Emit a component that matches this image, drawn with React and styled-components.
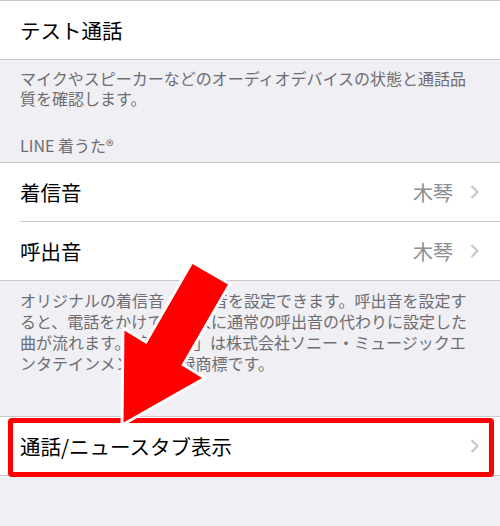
import React from 'react';
import styled, { createGlobalStyle } from 'styled-components';

const GlobalStyle = createGlobalStyle`
  html, body {
    margin: 0;
    padding: 0;
    background: #efeff4;
  }
  body {
    font-family: "Noto Sans CJK JP", "Noto Sans", "Liberation Sans", sans-serif;
    -webkit-font-smoothing: antialiased;
  }
`;

const Page = styled.div`
  position: relative;
  width: 500px;
  height: 526px;
  overflow: hidden;
  background: #efeff4;
`;

const Group = styled.div`
  position: relative;
  background: #fff;
  border-top: 1px solid #c8c7cc;
  border-bottom: 1px solid #c8c7cc;
  margin-top: ${(p) => p.$gap || 0}px;
`;

const Row = styled.div`
  height: 58px;
  display: flex;
  align-items: center;
  padding: 0 20px;
  box-sizing: border-box;
`;

const Separator = styled.div`
  height: 1px;
  margin-left: 20px;
  background: #c8c7cc;
`;

const Label = styled.span`
  flex: 1;
  font-size: 20.5px;
  color: #000;
  white-space: nowrap;
`;

const Value = styled.span`
  font-size: 20px;
  color: #8e8e93;
  margin-right: 16px;
`;

const Footer = styled.div`
  padding: ${(p) => p.$top}px 20px 0;
  font-size: 16px;
  line-height: ${(p) => p.$lh}px;
  color: #6d6d72;
  white-space: nowrap;
`;

const Header = styled.div`
  padding: 27px 20px 7px;
  font-size: 16px;
  line-height: 20px;
  color: #6d6d72;
`;

const Highlight = styled.div`
  position: absolute;
  top: 1px;
  left: 8px;
  right: 6px;
  height: 59px;
  box-sizing: border-box;
  border: 5px solid #ff0000;
  border-radius: 4px;
  pointer-events: none;
`;

const Overlay = styled.svg`
  position: absolute;
  top: 0;
  left: 0;
  pointer-events: none;
`;

function Chevron() {
  return (
    <svg width="11" height="16" viewBox="0 0 11 16">
      <path d="M2.5 2 L8.5 8 L2.5 14" fill="none" stroke="#c7c7cc" strokeWidth="2.2" />
    </svg>
  );
}

function Lines({ lines }) {
  return lines.map((l, i) => (
    <React.Fragment key={i}>
      {l}
      {i < lines.length - 1 && <br />}
    </React.Fragment>
  ));
}

export default function App() {
  return (
    <>
      <GlobalStyle />
      <Page>
        <Group>
          <Row>
            <Label>テスト通話</Label>
          </Row>
        </Group>
        <Footer $top={8} $lh={20}>
          <Lines
            lines={[
              'マイクやスピーカーなどのオーディオデバイスの状態と通話品',
              '質を確認します。',
            ]}
          />
        </Footer>
        <Header>LINE 着うた®</Header>
        <Group>
          <Row>
            <Label>着信音</Label>
            <Value>木琴</Value>
            <Chevron />
          </Row>
          <Separator />
          <Row>
            <Label>呼出音</Label>
            <Value>木琴</Value>
            <Chevron />
          </Row>
        </Group>
        <Footer $top={9} $lh={21}>
          <Lines
            lines={[
              'オリジナルの着信音・呼出音を設定できます。呼出音を設定す',
              'ると、電話をかけてきた人に通常の呼出音の代わりに設定した',
              '曲が流れます。「着うた®」は株式会社ソニー・ミュージックエ',
              'ンタテインメントの登録商標です。',
            ]}
          />
        </Footer>
        <Group $gap={42}>
          <Row>
            <Label>通話/ニュースタブ表示</Label>
            <Chevron />
          </Row>
          <Highlight />
        </Group>
        <Overlay width="500" height="526" viewBox="0 0 500 526">
          <polygon
            points="192,262 230,284 183.4,364.8 205,378 122,425 123,328 145.9,341.9"
            fill="#ff0000"
            stroke="#ffffff"
            strokeWidth="3"
            strokeLinejoin="miter"
          />
        </Overlay>
      </Page>
    </>
  );
}
